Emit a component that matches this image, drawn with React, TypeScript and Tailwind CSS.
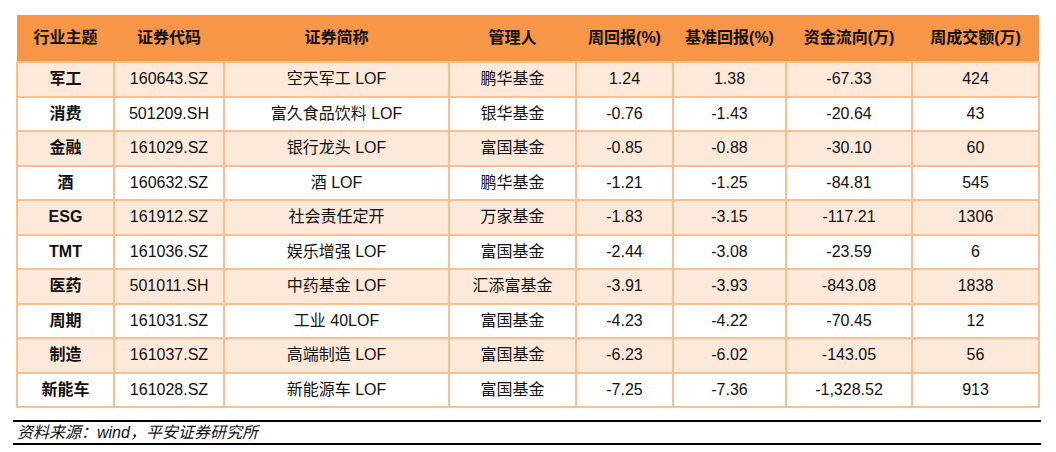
import React from 'react';

type Row = {
  theme: string;
  code: string;
  name: string;
  manager: string;
  weekly: string;
  bench: string;
  flow: string;
  volume: string;
};

const headers = [
  '行业主题',
  '证券代码',
  '证券简称',
  '管理人',
  '周回报(%)',
  '基准回报(%)',
  '资金流向(万)',
  '周成交额(万)',
];

const widths = ['w-[97px]', 'w-[110px]', 'w-[225px]', 'w-[127px]', 'w-[97px]', 'w-[113px]', 'w-[126px]', 'w-[127px]'];

const rows: Row[] = [
  { theme: '军工', code: '160643.SZ', name: '空天军工 LOF', manager: '鹏华基金', weekly: '1.24', bench: '1.38', flow: '-67.33', volume: '424' },
  { theme: '消费', code: '501209.SH', name: '富久食品饮料 LOF', manager: '银华基金', weekly: '-0.76', bench: '-1.43', flow: '-20.64', volume: '43' },
  { theme: '金融', code: '161029.SZ', name: '银行龙头 LOF', manager: '富国基金', weekly: '-0.85', bench: '-0.88', flow: '-30.10', volume: '60' },
  { theme: '酒', code: '160632.SZ', name: '酒 LOF', manager: '鹏华基金', weekly: '-1.21', bench: '-1.25', flow: '-84.81', volume: '545' },
  { theme: 'ESG', code: '161912.SZ', name: '社会责任定开', manager: '万家基金', weekly: '-1.83', bench: '-3.15', flow: '-117.21', volume: '1306' },
  { theme: 'TMT', code: '161036.SZ', name: '娱乐增强 LOF', manager: '富国基金', weekly: '-2.44', bench: '-3.08', flow: '-23.59', volume: '6' },
  { theme: '医药', code: '501011.SH', name: '中药基金 LOF', manager: '汇添富基金', weekly: '-3.91', bench: '-3.93', flow: '-843.08', volume: '1838' },
  { theme: '周期', code: '161031.SZ', name: '工业 40LOF', manager: '富国基金', weekly: '-4.23', bench: '-4.22', flow: '-70.45', volume: '12' },
  { theme: '制造', code: '161037.SZ', name: '高端制造 LOF', manager: '富国基金', weekly: '-6.23', bench: '-6.02', flow: '-143.05', volume: '56' },
  { theme: '新能车', code: '161028.SZ', name: '新能源车 LOF', manager: '富国基金', weekly: '-7.25', bench: '-7.36', flow: '-1,328.52', volume: '913' },
];

const font = "font-['Liberation_Sans','Noto_Sans_CJK_SC',sans-serif]";

export default function App() {
  return (
    <div className={`h-[452px] w-[1056px] bg-white pt-[15px] text-[#111] ${font}`}>
      <table className="ml-[16px] w-[1022px] table-fixed border-collapse text-[16px]">
        <thead>
          <tr className="h-[47px] bg-[#f79646]">
            {headers.map((h, i) => (
              <th key={h} className={`${widths[i]} p-0 text-center font-bold`}>
                {h}
              </th>
            ))}
          </tr>
        </thead>
        <tbody>
          {rows.map((r, idx) => {
            const cells = [r.code, r.name, r.manager, r.weekly, r.bench, r.flow, r.volume];
            return (
              <tr key={r.code} className={`h-[34.5px] ${idx % 2 === 0 ? 'bg-[#fde9d9]' : 'bg-white'}`}>
                <td className="border-2 border-[#fabf8f] p-0 text-center font-bold">{r.theme}</td>
                {cells.map((c, i) => (
                  <td key={i} className="border-2 border-[#fabf8f] p-0 text-center">
                    {c}
                  </td>
                ))}
              </tr>
            );
          })}
        </tbody>
      </table>
      <div className="mt-[12px] ml-[13px] w-[1028px] border-y-2 border-black py-[1px] pl-[4px] text-[16px] leading-[19px] italic">
        资料来源：wind，平安证券研究所
      </div>
    </div>
  );
}
